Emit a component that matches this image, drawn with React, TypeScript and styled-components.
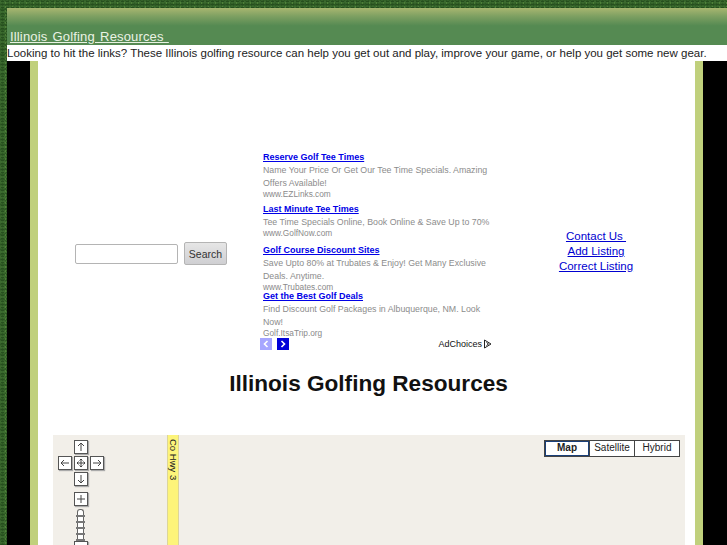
import styled, { createGlobalStyle } from "styled-components"

const GlobalStyle = createGlobalStyle`
  html, body {
    margin: 0;
    height: 545px;
    overflow: hidden;
  }
  body {
    background-color: #3b6a2e;
    background-image:
      radial-gradient(#264f1e 1px, transparent 1.3px),
      radial-gradient(#558a3c 0.8px, transparent 1.1px),
      radial-gradient(#2c5823 1px, transparent 1.3px);
    background-size: 5px 3px, 7px 4px, 3px 5px;
    background-position: 0 0, 2px 1px, 1px 2px;
    font-family: "Liberation Sans", Arial, sans-serif;
  }
`

const Page = styled.div`
  padding: 8px 0 0 7px;
`

const Header = styled.div`
  height: 37px;
  box-sizing: border-box;
  padding: 19px 0 0 3px;
  background: linear-gradient(180deg, #a8b670 0%, #7ea062 22%, #558a52 48%, #558a52 100%);
`

const HeaderLink = styled.a`
  color: #eaf2e4;
  font-size: 13px;
  line-height: 16px;
  letter-spacing: 0.15px;
  word-spacing: 1.5px;
  text-decoration: underline;
  white-space: pre;
`

const Tagline = styled.div`
  height: 16px;
  background: #fff;
  color: #222;
  font-size: 11.5px;
  line-height: 16px;
  white-space: nowrap;
`

const Frame = styled.div`
  display: flex;
  height: 484px;
  background: #000;
  padding: 0 24px 0 23px;
`

const Content = styled.div`
  flex: 1;
  background: #fff;
  border-left: 8px solid #c0d07c;
  border-right: 8px solid #c0d07c;
  overflow: hidden;
`

const TopRow = styled.div`
  display: flex;
  height: 294px;
`

const SearchColumn = styled.div`
  width: 225px;
  display: flex;
  align-items: center;
  justify-content: flex-end;
  gap: 6px;
  padding-top: 91px;
  box-sizing: border-box;
  padding-right: 36px;
`

const SearchInput = styled.input`
  width: 103px;
  height: 20px;
  box-sizing: border-box;
  border: 1px solid #b4b4b4;
  border-radius: 2px;
  background: #fff;
  padding: 0;
`

const SearchButton = styled.button`
  width: 43px;
  height: 23px;
  padding: 0;
  border: 1px solid #b4b4b4;
  border-radius: 2px;
  background: linear-gradient(180deg, #e6e6e6, #cfcfd2);
  color: #333;
  font-family: inherit;
  font-size: 10.5px;
`

const AdBlock = styled.div`
  width: 229px;
  padding-top: 90px;
  box-sizing: border-box;
  display: flex;
  flex-direction: column;
`

const Ad = styled.div<{ $gap: number }>`
  margin-bottom: ${(p) => p.$gap}px;
`

const AdTitle = styled.a`
  display: block;
  color: #0000e6;
  font-size: 9px;
  line-height: 12px;
  font-weight: bold;
  text-decoration: underline;
`

const AdText = styled.div`
  color: #8c8c8c;
  font-size: 8.8px;
  line-height: 13px;
  margin-top: 1px;
  white-space: nowrap;
`

const AdUrl = styled.div`
  color: #8a8a8a;
  font-size: 8.3px;
  line-height: 12px;
  margin-top: -2px;
`

const AdFooter = styled.div`
  display: flex;
  align-items: center;
  height: 12px;
`

const ArrowButton = styled.span<{ $dim?: boolean }>`
  width: 12px;
  height: 12px;
  margin-left: -3px;
  margin-right: 8px;
  display: flex;
  align-items: center;
  justify-content: center;
  background: ${(p) => (p.$dim ? "#a6a6ff" : "#0000d8")};
`

const AdChoices = styled.span`
  margin-left: auto;
  display: flex;
  align-items: center;
  gap: 1px;
  color: #111;
  font-size: 9px;
`

const LinkColumn = styled.div`
  flex: 1;
  display: flex;
  flex-direction: column;
  align-items: center;
  padding: 168px 0 0 0;
  margin-left: 16px;
  margin-right: 11px;
`

const SideLink = styled.a`
  color: #0000d0;
  font-size: 11.5px;
  line-height: 15px;
  text-decoration: underline;
  white-space: pre;
`

const Title = styled.h1`
  margin: 0;
  height: 80px;
  padding: 15px 0 0 4px;
  box-sizing: border-box;
  text-align: center;
  color: #111;
  font-size: 22.6px;
  line-height: 28px;
  font-weight: bold;
`

const MapBox = styled.div`
  position: relative;
  height: 110px;
  margin: 0 10px 0 15px;
  background: #f2efe9;
  overflow: hidden;
`

const Road = styled.div`
  position: absolute;
  left: 114px;
  top: 0;
  bottom: 0;
  width: 10px;
  background: #fdf47a;
  border-left: 1px solid #dcd59a;
  border-right: 1px solid #dcd59a;
  color: #222;
  font-size: 9.5px;
  line-height: 10px;
  writing-mode: vertical-rl;
  padding-top: 4px;
  white-space: nowrap;
`

const PanButton = styled.div<{ $x: number; $y: number }>`
  position: absolute;
  left: ${(p) => p.$x}px;
  top: ${(p) => p.$y}px;
  width: 14px;
  height: 14px;
  box-sizing: border-box;
  background: #fff;
  border: 1px solid #555;
  box-shadow: 1px 1px 1px #aaa;
  display: flex;
  align-items: center;
  justify-content: center;
`

const SliderTrack = styled.div`
  position: absolute;
  left: 24px;
  top: 74px;
  width: 7px;
  height: 36px;
  box-sizing: border-box;
  background: #fff;
  border: 1px solid #666;
  border-bottom: 0;
  border-radius: 3px 3px 0 0;
`

const SliderTick = styled.div<{ $y: number }>`
  position: absolute;
  left: 23px;
  top: ${(p) => p.$y}px;
  width: 9px;
  height: 2px;
  background: #777;
`

const TypeBar = styled.div`
  position: absolute;
  right: 5px;
  top: 5px;
  display: flex;
  height: 17px;
  box-sizing: border-box;
  border: 1px solid #444;
  background: #fff;
`

const TypeButton = styled.div<{ $on?: boolean; $w: number }>`
  width: ${(p) => p.$w}px;
  box-sizing: border-box;
  text-align: center;
  color: #222;
  font-size: 10px;
  line-height: 14px;
  font-weight: ${(p) => (p.$on ? "bold" : "normal")};
  border-left: ${(p) => (p.$on ? "0" : "1px solid #444")};
  ${(p) => (p.$on ? "box-shadow: inset 0 0 0 1px #1a3f78;" : "")}
`

const Arrow = ({ d }: { d: string }) => (
  <svg width="10" height="10" viewBox="0 0 10 10" fill="none" stroke="#444" strokeWidth="1">
    <path d={d} />
  </svg>
)

const ads = [
  {
    title: "Reserve Golf Tee Times",
    text: ["Name Your Price Or Get Our Tee Time Specials. Amazing", "Offers Available!"],
    url: "www.EZLinks.com",
    gap: 3,
  },
  {
    title: "Last Minute Tee Times",
    text: ["Tee Time Specials Online, Book Online & Save Up to 70%"],
    url: "www.GolfNow.com",
    gap: 5,
  },
  {
    title: "Golf Course Discount Sites",
    text: ["Save Upto 80% at Trubates & Enjoy! Get Many Exclusive", "Deals. Anytime."],
    url: "www.Trubates.com",
    gap: -3,
  },
  {
    title: "Get the Best Golf Deals",
    text: ["Find Discount Golf Packages in Albuquerque, NM. Look", "Now!"],
    url: "Golf.ItsaTrip.org",
    gap: -1,
  },
]

export default function App() {
  return (
    <Page>
      <GlobalStyle />
      <Header>
        <HeaderLink href="#">Illinois Golfing Resources </HeaderLink>
      </Header>
      <Tagline>
        Looking to hit the links? These Illinois golfing resource can help you get out and play, improve your game, or help you get some new gear.
      </Tagline>
      <Frame>
        <Content>
          <TopRow>
            <SearchColumn>
              <SearchInput />
              <SearchButton>Search</SearchButton>
            </SearchColumn>
            <AdBlock>
              {ads.map((ad) => (
                <Ad key={ad.title} $gap={ad.gap}>
                  <AdTitle href="#">{ad.title}</AdTitle>
                  <AdText>
                    {ad.text.map((line) => (
                      <div key={line}>{line}</div>
                    ))}
                  </AdText>
                  <AdUrl>{ad.url}</AdUrl>
                </Ad>
              ))}
              <AdFooter>
                <ArrowButton $dim>
                  <svg width="8" height="8" viewBox="0 0 8 8" fill="none" stroke="#fff" strokeWidth="1.6">
                    <path d="M5.5 1 L2.5 4 L5.5 7" />
                  </svg>
                </ArrowButton>
                <ArrowButton>
                  <svg width="8" height="8" viewBox="0 0 8 8" fill="none" stroke="#fff" strokeWidth="1.6">
                    <path d="M2.5 1 L5.5 4 L2.5 7" />
                  </svg>
                </ArrowButton>
                <AdChoices>
                  AdChoices
                  <svg width="9" height="10" viewBox="0 0 9 10" fill="none" stroke="#222" strokeWidth="1">
                    <path d="M1.5 1 L8 5 L1.5 9 Z M3.5 3.5 L5.5 5 L3.5 6.5" />
                  </svg>
                </AdChoices>
              </AdFooter>
            </AdBlock>
            <LinkColumn>
              <SideLink href="#">Contact Us </SideLink>
              <SideLink href="#">Add Listing</SideLink>
              <SideLink href="#">Correct Listing</SideLink>
            </LinkColumn>
          </TopRow>
          <Title>Illinois Golfing Resources</Title>
          <MapBox>
            <Road>Co Hwy 3</Road>
            <PanButton $x={21} $y={5}>
              <Arrow d="M5 9 V1 M2 4 L5 1 L8 4" />
            </PanButton>
            <PanButton $x={5} $y={21}>
              <Arrow d="M9 5 H1 M4 2 L1 5 L4 8" />
            </PanButton>
            <PanButton $x={21} $y={21}>
              <Arrow d="M5 1 V9 M1 5 H9 M3.5 2.5 L5 1 L6.5 2.5 M3.5 7.5 L5 9 L6.5 7.5 M2.5 3.5 L1 5 L2.5 6.5 M7.5 3.5 L9 5 L7.5 6.5" />
            </PanButton>
            <PanButton $x={37} $y={21}>
              <Arrow d="M1 5 H9 M6 2 L9 5 L6 8" />
            </PanButton>
            <PanButton $x={21} $y={37}>
              <Arrow d="M5 1 V9 M2 6 L5 9 L8 6" />
            </PanButton>
            <PanButton $x={21} $y={57}>
              <Arrow d="M5 1 V9 M1 5 H9" />
            </PanButton>
            <SliderTrack />
            <SliderTick $y={80} />
            <SliderTick $y={86} />
            <SliderTick $y={92} />
            <SliderTick $y={98} />
            <SliderTick $y={104} />
            <PanButton $x={21} $y={106} />
            <TypeBar>
              <TypeButton $on $w={44}>Map</TypeButton>
              <TypeButton $w={45}>Satellite</TypeButton>
              <TypeButton $w={45}>Hybrid</TypeButton>
            </TypeBar>
          </MapBox>
        </Content>
      </Frame>
    </Page>
  )
}
